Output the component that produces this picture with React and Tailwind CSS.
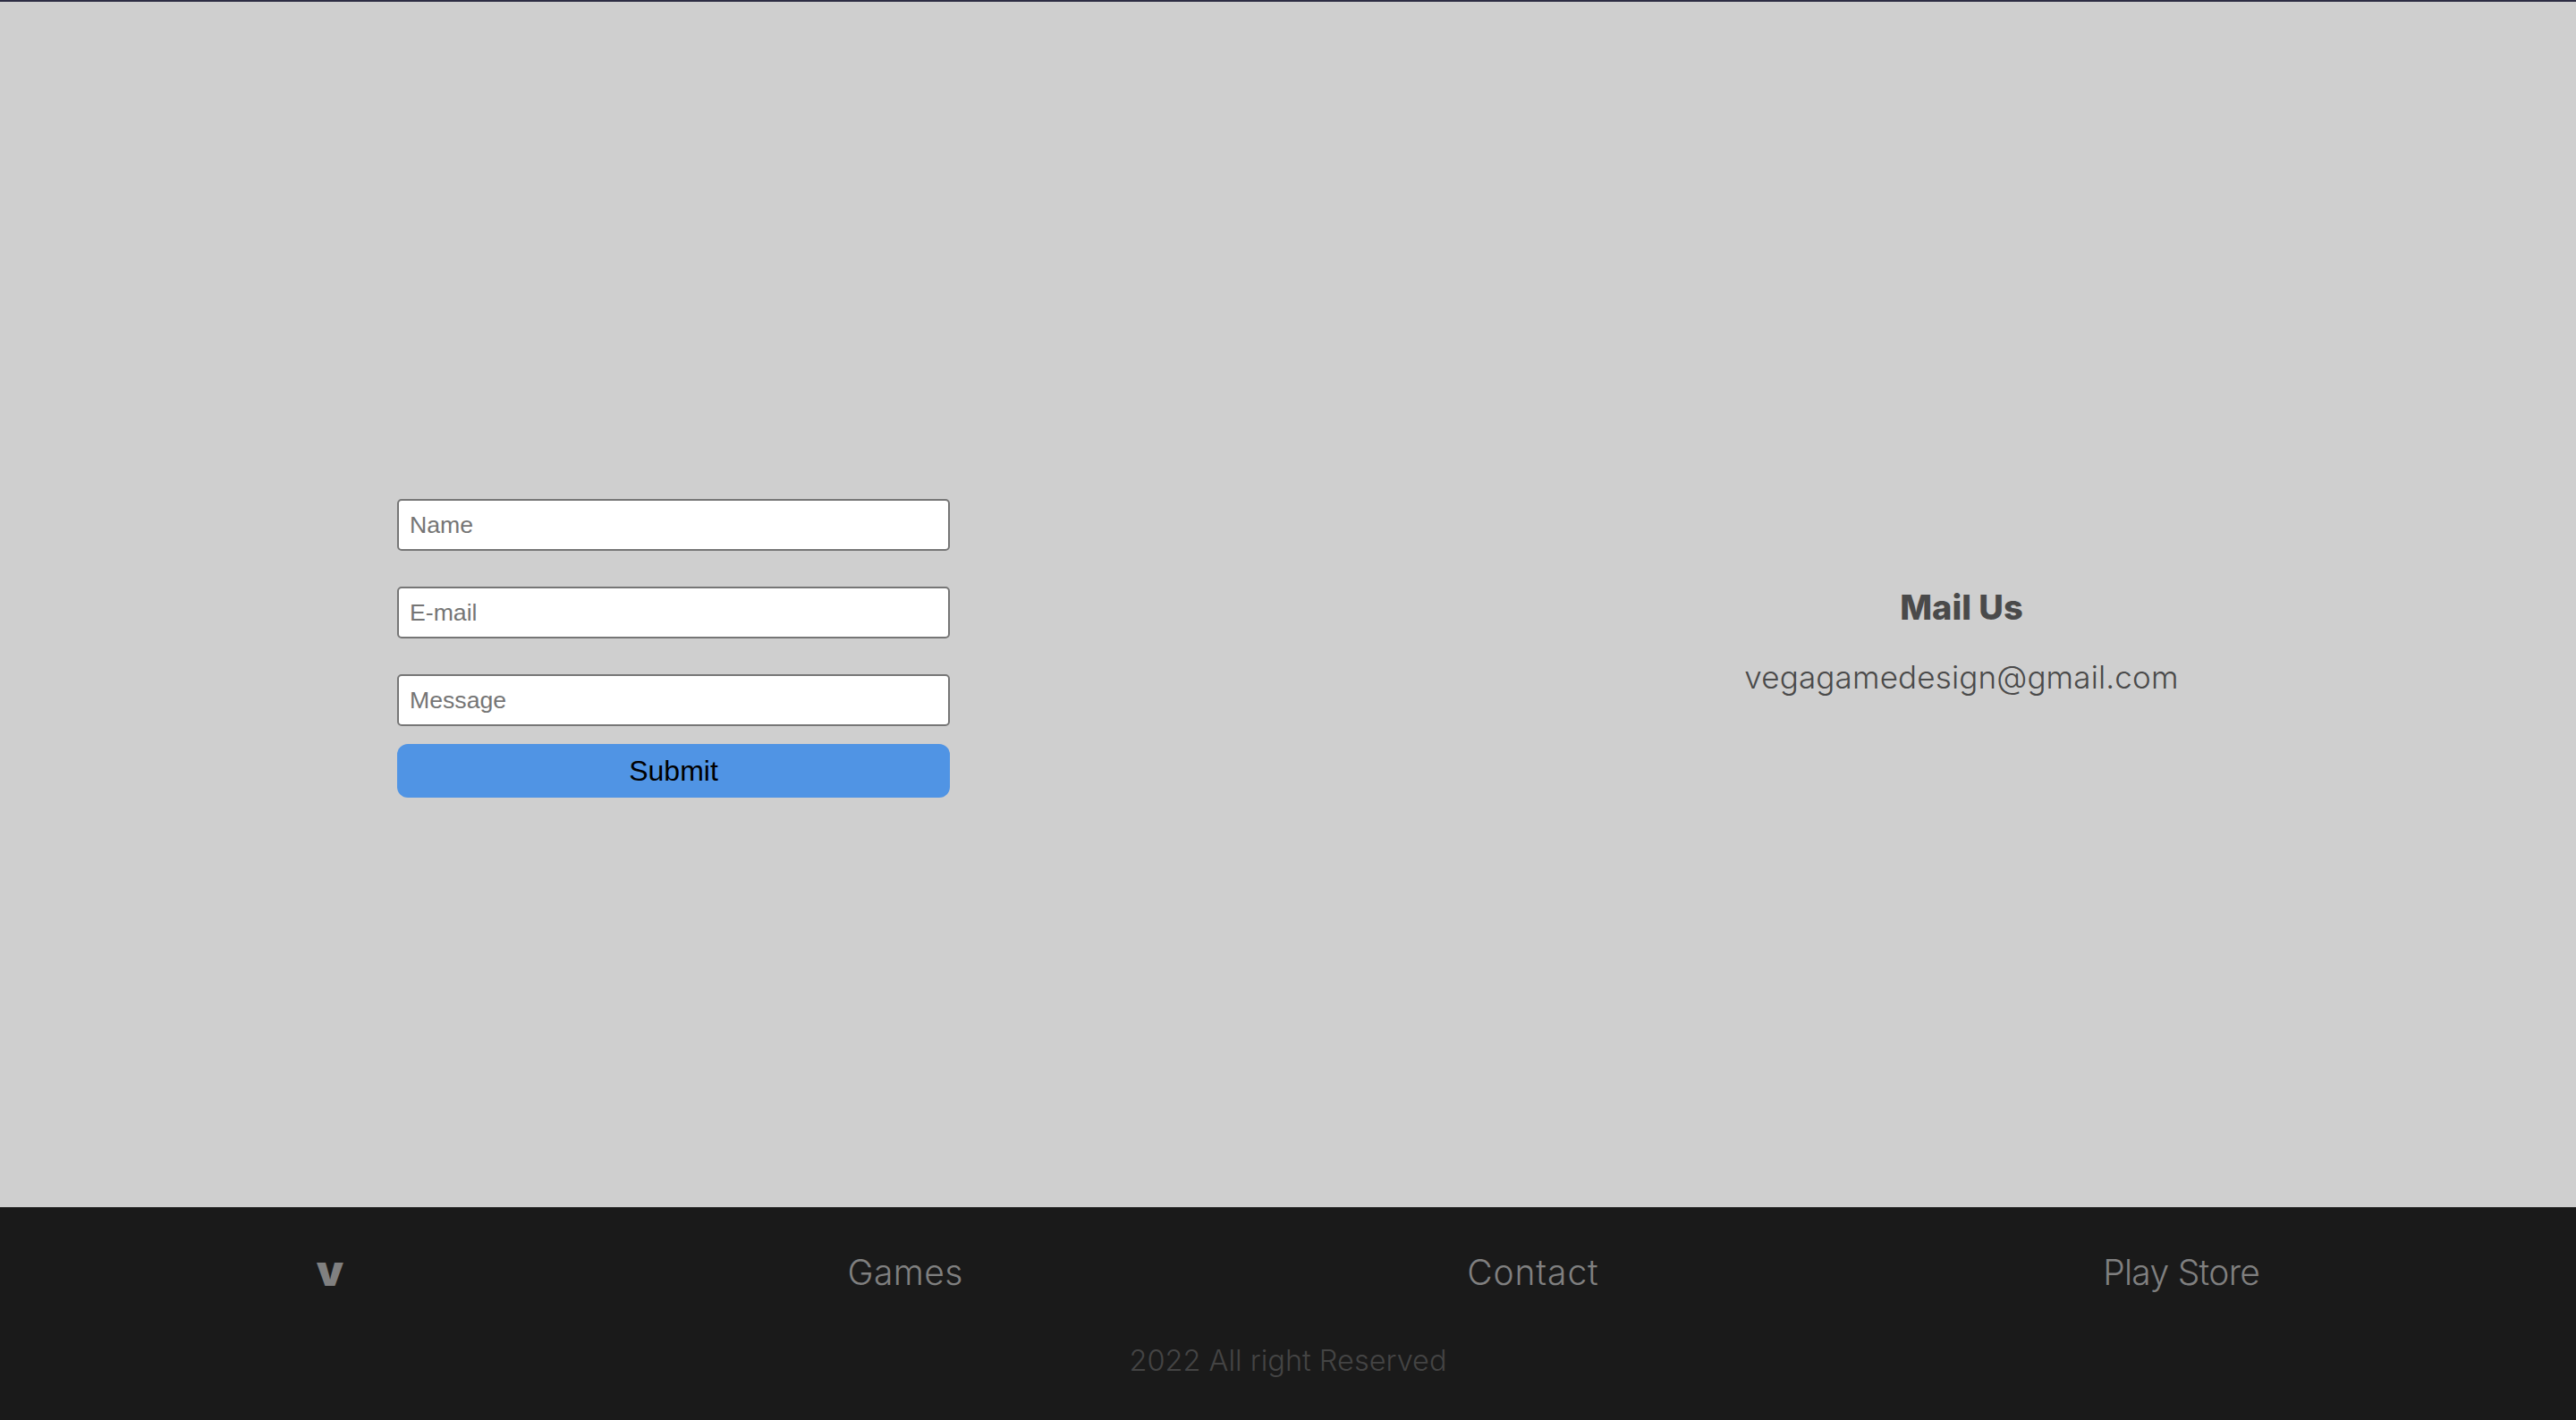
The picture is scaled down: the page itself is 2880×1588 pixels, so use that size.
const fields = ["Name", "E-mail", "Message"];
const links = [
  { label: "Games", tracking: "tracking-[0.4px]" },
  { label: "Contact", tracking: "tracking-[0.9px]" },
  { label: "Play Store", tracking: "tracking-[-0.7px]" },
];

export default function App() {
  return (
    <div className="min-h-[1588px] flex flex-col bg-[#cfcfcf] font-['Inter',sans-serif]">
      <div className="h-[2px] bg-[#2d2d44]"></div>

      {/* Contact section */}
      <main className="h-[1348px] pt-[98px] grid grid-cols-[1506px_1fr] items-center">
        <form className="w-[618px] mx-auto flex flex-col font-['Liberation_Sans',Arial,sans-serif]">
          <div className="flex flex-col gap-[40px]">
            {fields.map((f) => (
              <input
                key={f}
                placeholder={f}
                className="h-[58px] px-[12px] bg-white border-2 border-[#767676] rounded-[5px] text-[26.67px] placeholder:text-[#757575]"
              />
            ))}
          </div>
          <button type="button" className="mt-[20px] h-[60px] bg-[#5094e4] rounded-[12px] text-[32px] text-black">
            Submit
          </button>
        </form>
        <div className="-mt-[14px] flex flex-col items-center text-[#4a4a4a]">
          <h3 className="text-[38px] leading-[56px] font-extrabold">Mail Us</h3>
          <p className="mt-[23px] mb-[1px] text-[35px] leading-[54px] font-light tracking-[0.15px]">vegagamedesign@gmail.com</p>
        </div>
      </main>

      {/* Footer */}
      <footer className="h-[238px] bg-[#1a1a1a] pt-[46px]">
        <nav className="w-[95%] mx-auto flex justify-around items-center text-[#808080] text-[39px] leading-[54px] font-light">
          <span className="mb-[4px] text-[48px] leading-[50px] font-black">v</span>
          {links.map((l) => (
            <a key={l.label} href="#" className={l.tracking}>{l.label}</a>
          ))}
        </nav>
        <p className="mt-[48px] text-center text-[#444444] text-[32.5px] leading-[48px] font-light">2022 All right Reserved</p>
      </footer>
    </div>
  );
}
